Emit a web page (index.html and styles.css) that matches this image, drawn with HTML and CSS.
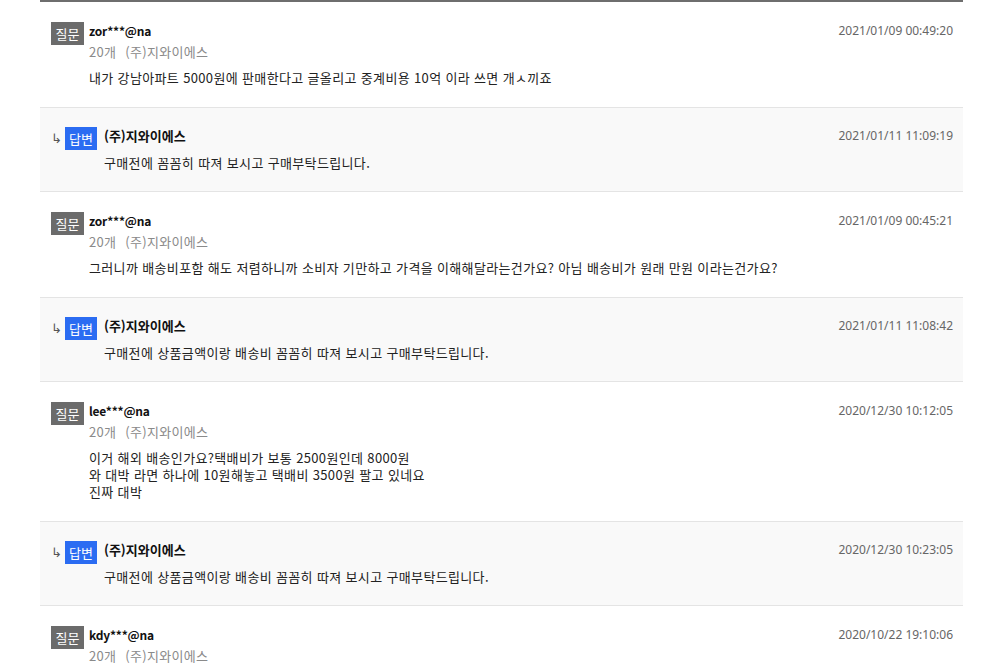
FILE: index.html
```html
<!DOCTYPE html>
<html lang="ko">
<head>
<meta charset="utf-8">
<link rel="stylesheet" href="styles.css">
</head>
<body>
<div class="qna">
  <div class="item q">
    <span class="badge q-badge">질문</span>
    <div class="body">
      <div class="name id">zor***@na</div>
      <div class="meta"><span>20개</span><span>(주)지와이에스</span></div>
      <div class="text">내가 강남아파트 5000원에 판매한다고 글올리고 중계비용 10억 이라 쓰면 개ㅅ끼죠</div>
    </div>
    <div class="date">2021/01/09 00:49:20</div>
  </div>
  <div class="item a">
    <span class="arrow">↳</span>
    <span class="badge a-badge">답변</span>
    <div class="body">
      <div class="name">(주)지와이에스</div>
      <div class="text">구매전에 꼼꼼히 따져 보시고 구매부탁드립니다.</div>
    </div>
    <div class="date">2021/01/11 11:09:19</div>
  </div>
  <div class="item q">
    <span class="badge q-badge">질문</span>
    <div class="body">
      <div class="name id">zor***@na</div>
      <div class="meta"><span>20개</span><span>(주)지와이에스</span></div>
      <div class="text">그러니까 배송비포함 해도 저렴하니까 소비자 기만하고 가격을 이해해달라는건가요? 아님 배송비가 원래 만원 이라는건가요?</div>
    </div>
    <div class="date">2021/01/09 00:45:21</div>
  </div>
  <div class="item a">
    <span class="arrow">↳</span>
    <span class="badge a-badge">답변</span>
    <div class="body">
      <div class="name">(주)지와이에스</div>
      <div class="text">구매전에 상품금액이랑 배송비 꼼꼼히 따져 보시고 구매부탁드립니다.</div>
    </div>
    <div class="date">2021/01/11 11:08:42</div>
  </div>
  <div class="item q">
    <span class="badge q-badge">질문</span>
    <div class="body">
      <div class="name id">lee***@na</div>
      <div class="meta"><span>20개</span><span>(주)지와이에스</span></div>
      <div class="text">이거 해외 배송인가요?택배비가 보통 2500원인데 8000원<br>와 대박 라면 하나에 10원해놓고 택배비 3500원 팔고 있네요<br>진짜 대박</div>
    </div>
    <div class="date">2020/12/30 10:12:05</div>
  </div>
  <div class="item a">
    <span class="arrow">↳</span>
    <span class="badge a-badge">답변</span>
    <div class="body">
      <div class="name">(주)지와이에스</div>
      <div class="text">구매전에 상품금액이랑 배송비 꼼꼼히 따져 보시고 구매부탁드립니다.</div>
    </div>
    <div class="date">2020/12/30 10:23:05</div>
  </div>
  <div class="item q">
    <span class="badge q-badge">질문</span>
    <div class="body">
      <div class="name id">kdy***@na</div>
      <div class="meta"><span>20개</span><span>(주)지와이에스</span></div>
    </div>
    <div class="date">2020/10/22 19:10:06</div>
  </div>
</div>
</body>
</html>
```
FILE: styles.css
```css
html, body {
  margin: 0;
  padding: 0;
  background: #fff;
}
body {
  font-family: "Noto Sans CJK KR", "Noto Sans", sans-serif;
  font-size: 13px;
  color: #222;
  overflow: hidden;
}
.qna {
  margin-left: 40px;
  width: 923px;
  border-top: 2px solid #6e6e6e;
}
.item {
  display: flex;
  align-items: flex-start;
  padding: 20px 10px 21px 11px;
  border-bottom: 1px solid #e4e4e4;
}
.item.a {
  background: #f9f9f9;
  padding: 19px 10px 20px 11px;
}
.badge {
  flex: none;
  width: 33px;
  height: 23px;
  line-height: 23px;
  text-align: center;
  color: #fff;
  font-size: 13px;
}
.q-badge { background: #6b6b6b; }
.a-badge { background: #2b6cf2; width: 32px; }
.arrow {
  flex: none;
  width: 14px;
  font-size: 13px;
  line-height: 23px;
  color: #555;
  font-family: "DejaVu Sans", sans-serif;
}
.body {
  flex: 1;
  padding-left: 5px;
  padding-right: 8px;
}
.a .body { padding-left: 7px; }
.name {
  font-weight: bold;
  line-height: 17px;
  color: #111;
  font-size: 13px;
}
.name.id {
  font-size: 12px;
  letter-spacing: -0.2px;
}
.meta {
  margin-top: 3px;
  line-height: 20px;
  color: #8a8a8a;
  display: flex;
  gap: 9px;
  letter-spacing: 0.3px;
}
.text {
  margin-top: 7px;
  line-height: 17px;
  letter-spacing: 0.35px;
}
.a .text { margin-top: 10px; }
.date {
  flex: none;
  color: #666;
  font-size: 12px;
  line-height: 17px;
  font-family: "Noto Sans", sans-serif;
}
```
